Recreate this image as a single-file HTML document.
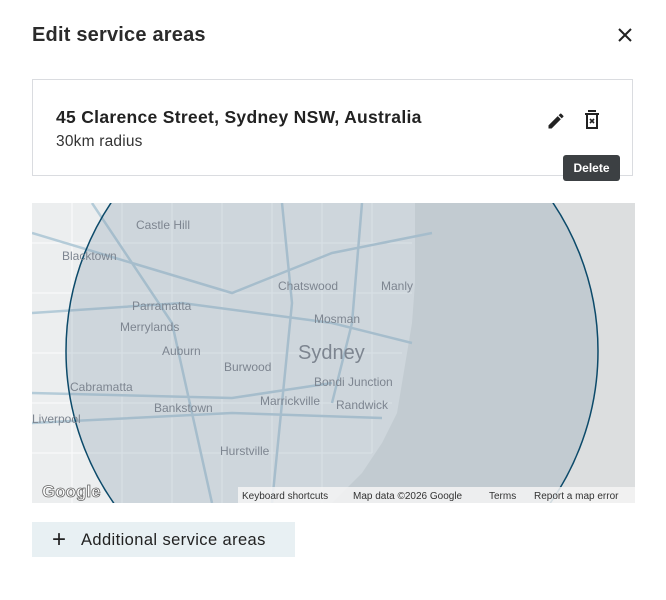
<!DOCTYPE html>
<html><head><meta charset="utf-8"><style>
body{margin:0;width:666px;height:600px;background:#fff;font-family:"Liberation Sans",sans-serif;color:#202124;position:relative;overflow:hidden}
.t{position:absolute;left:32px;top:24px;font-size:20px;font-weight:bold;color:#2b2b2b;letter-spacing:.2px}
.x{position:absolute;left:615px;top:25px}
.card{position:absolute;left:32px;top:79px;width:601px;height:97px;border:1px solid #dadce0;box-sizing:border-box}
.a{position:absolute;left:23px;top:27px;font-size:17.5px;font-weight:bold;color:#222;letter-spacing:.3px}
.r{position:absolute;left:23px;top:53px;font-size:15.5px;color:#333;letter-spacing:.2px}
.tip{position:absolute;left:563px;top:155px;width:57px;height:26px;background:#3c4043;color:#fff;font-size:12px;font-weight:bold;line-height:26px;text-align:center;border-radius:3px}
.map{position:absolute;left:32px;top:203px;width:603px;height:300px;overflow:hidden;background:#eceeef}
.btn{position:absolute;left:32px;top:522px;width:263px;height:35px;background:#e8f0f3;font-size:16.5px;color:#222;line-height:37px;letter-spacing:.4px}
.lbl{font-family:"Liberation Sans",sans-serif;fill:#7d8590}
</style></head><body>
<div class="t">Edit service areas</div>
<svg class="x" width="20" height="20" viewBox="0 0 20 20"><path d="M4 4L16 16M16 4L4 16" stroke="#222" stroke-width="2"/></svg>
<div class="card"><div class="a">45 Clarence Street, Sydney NSW, Australia</div><div class="r">30km radius</div>
<svg style="position:absolute;left:513px;top:31px" width="20" height="20" viewBox="0 0 24 24"><path d="M3 17.25V21h3.75L17.81 9.94l-3.75-3.75L3 17.25zM20.71 7.04a1 1 0 000-1.41l-2.34-2.34a1 1 0 00-1.41 0l-1.83 1.83 3.75 3.75 1.83-1.83z" fill="#222"/></svg>
<svg style="position:absolute;left:549px;top:29px" width="20" height="22" viewBox="0 0 20 22"><path d="M6 2h8M3 5h14M5 5v14h10V5" fill="none" stroke="#222" stroke-width="2"/><path d="M8 10l4 4M12 10l-4 4" stroke="#222" stroke-width="1.6"/></svg>
</div>
<div class="tip">Delete</div>
<div class="map"><svg width="603" height="300">
<rect width="603" height="300" fill="#eceeef"/>
<path d="M383 0L603 0L603 300L300 300L330 270L350 240L365 210L370 180L375 150L380 120L383 80Z" fill="#dcdedf"/>
<g stroke="#fff" stroke-width="1" fill="none" opacity=".8">
<path d="M0 40H380M0 90H380M0 150H370M0 200H360M0 250H340M40 0V300M90 0V300M140 0V300M190 0V300M240 0V300M290 0V300M340 0V250"/>
</g>
<g stroke="#b4cbd8" stroke-width="2.5" fill="none">
<path d="M0 30L100 60L200 90L300 50L400 30M0 110L150 100L300 120L380 140M0 220L200 210L350 215M60 0L140 120L180 300M250 0L260 100L240 300M330 0L320 120L300 200M0 190L200 195L300 180"/>
</g>
<circle cx="300" cy="148" r="266" fill="rgba(130,155,172,0.28)" stroke="#0c4a6a" stroke-width="1.5"/>
<g class="lbl" font-size="12">
<text x="104" y="26">Castle Hill</text><text x="30" y="57">Blacktown</text><text x="100" y="107">Parramatta</text>
<text x="88" y="128">Merrylands</text><text x="130" y="152">Auburn</text><text x="192" y="168">Burwood</text>
<text x="38" y="188">Cabramatta</text><text x="122" y="209">Bankstown</text><text x="228" y="202">Marrickville</text>
<text x="0" y="220">Liverpool</text><text x="188" y="252">Hurstville</text><text x="246" y="87">Chatswood</text>
<text x="282" y="120">Mosman</text><text x="349" y="87">Manly</text><text x="282" y="183">Bondi Junction</text><text x="304" y="206">Randwick</text>
<text x="266" y="156" font-size="20">Sydney</text>
</g>
<text x="10" y="294" font-size="17" font-weight="bold" fill="#fff" stroke="#666" stroke-width=".8">Google</text>
<rect x="206" y="284" width="397" height="16" fill="rgba(245,245,245,.85)"/>
<g font-size="10" fill="#333"><text x="210" y="296">Keyboard shortcuts</text><text x="321" y="296">Map data ©2026 Google</text><text x="457" y="296">Terms</text><text x="502" y="296">Report a map error</text></g>
</svg></div>
<div class="btn"><span style="position:absolute;left:20px;top:-1px;font-size:24px">+</span><span style="position:absolute;left:49px">Additional service areas</span></div>
</body></html>
